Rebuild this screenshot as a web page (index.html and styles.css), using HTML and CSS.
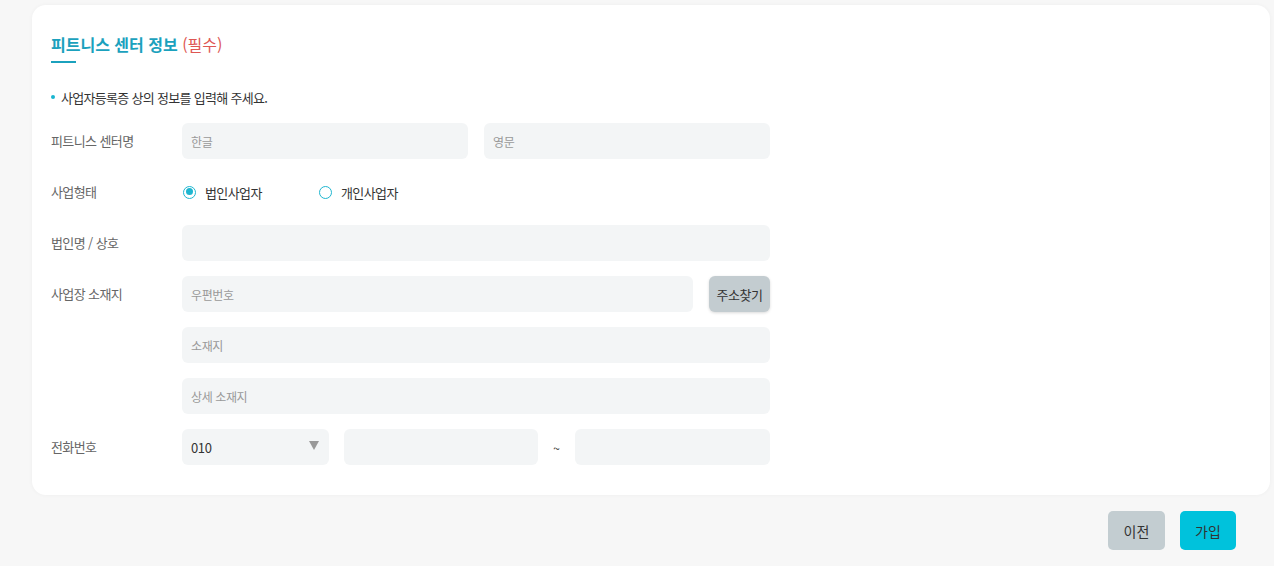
FILE: index.html
```html
<!DOCTYPE html>
<html lang="ko">
<head>
<meta charset="utf-8">
<link rel="stylesheet" href="styles.css">
</head>
<body>
<div class="page">
  <section class="card">
    <h2 class="title">피트니스 센터 정보 <span class="req">(필수)</span></h2>
    <div class="title-bar"></div>
    <p class="notice"><span class="dot"></span>사업자등록증 상의 정보를 입력해 주세요.</p>
    <div class="form">
      <div class="row">
        <div class="label">피트니스 센터명</div>
        <div class="fields two">
          <div class="input"><span class="ph">한글</span></div>
          <div class="input"><span class="ph">영문</span></div>
        </div>
      </div>
      <div class="row">
        <div class="label">사업형태</div>
        <div class="fields radios">
          <label class="radio checked"><span class="circle"></span>법인사업자</label>
          <label class="radio"><span class="circle"></span>개인사업자</label>
        </div>
      </div>
      <div class="row">
        <div class="label">법인명 / 상호</div>
        <div class="fields"><div class="input"></div></div>
      </div>
      <div class="row">
        <div class="label">사업장 소재지</div>
        <div class="fields stack">
          <div class="addr">
            <div class="input"><span class="ph">우편번호</span></div>
            <button class="find">주소찾기</button>
          </div>
          <div class="input"><span class="ph">소재지</span></div>
          <div class="input"><span class="ph">상세 소재지</span></div>
        </div>
      </div>
      <div class="row">
        <div class="label">전화번호</div>
        <div class="fields phone">
          <div class="input select"><span class="val">010</span><span class="arrow"></span></div>
          <div class="input"></div>
          <span class="tilde">~</span>
          <div class="input"></div>
        </div>
      </div>
    </div>
  </section>
  <div class="actions">
    <button class="btn prev">이전</button>
    <button class="btn join">가입</button>
  </div>
</div>
</body>
</html>
```
FILE: styles.css
```css
* { box-sizing: border-box; }
html, body {
  margin: 0;
  padding: 0;
  background: #f7f7f7;
  font-family: "Noto Sans CJK KR", "Noto Sans", sans-serif;
  color: #333;
}
.page {
  padding: 5px 4px 0 32px;
}
.card {
  background: #fff;
  border-radius: 14px;
  box-shadow: 0 0 4px rgba(0,0,0,0.04);
  padding: 27px 19px 30px 19px;
}
.title {
  margin: 0;
  font-size: 16px;
  line-height: 24px;
  font-weight: 700;
  color: #1ba1bd;
}
.title .req {
  font-weight: 400;
  color: #de5753;
}
.title-bar {
  width: 25px;
  height: 2px;
  background: #1ba1bd;
  margin-top: 5px;
}
.notice {
  margin: 25px 0 15px 0;
  font-size: 13px;
  line-height: 20px;
  letter-spacing: -0.7px;
  color: #333;
  display: flex;
  align-items: center;
}
.notice .dot {
  width: 4px;
  height: 4px;
  border-radius: 50%;
  background: #19b5d0;
  margin-right: 6px;
  margin-top: -2px;
}
.form {
  display: flex;
  flex-direction: column;
  gap: 15px;
}
.row {
  display: flex;
  align-items: flex-start;
}
.label {
  width: 131px;
  flex: none;
  height: 36px;
  line-height: 36px;
  font-size: 13px;
  letter-spacing: -0.6px;
  color: #666;
}
.fields {
  width: 588px;
  display: flex;
}
.fields > .input { flex: 1; }
.two { gap: 16px; }
.input {
  height: 36px;
  background: #f3f5f6;
  border-radius: 6px;
  display: flex;
  align-items: center;
  padding: 0 9px;
  font-size: 12px;
  letter-spacing: -0.4px;
}
.ph { color: #999; }
.radios {
  height: 36px;
  align-items: center;
}
.radio {
  display: flex;
  align-items: center;
  font-size: 13px;
  letter-spacing: -0.6px;
  color: #333;
  width: 136px;
  padding-left: 1px;
}
.circle {
  width: 13px;
  height: 13px;
  border-radius: 50%;
  border: 1.5px solid #1fb6d0;
  margin-right: 9px;
  position: relative;
}
.radio.checked .circle::after {
  content: "";
  position: absolute;
  left: 1.5px;
  top: 1.5px;
  width: 7px;
  height: 7px;
  border-radius: 50%;
  background: #1fb6d0;
}
.stack {
  flex-direction: column;
  gap: 15px;
}
.stack > .input { flex: none; }
.addr {
  display: flex;
  gap: 16px;
}
.addr .input { flex: 1; }
.find {
  width: 61px;
  height: 36px;
  border: none;
  border-radius: 6px;
  background: #c3ccd0;
  box-shadow: 0 1px 3px rgba(0,0,0,0.15);
  font-family: inherit;
  font-size: 13px;
  letter-spacing: -0.5px;
  color: #333;
  padding: 0;
}
.phone { align-items: center; }
.phone .select {
  flex: none;
  width: 147px;
  margin-right: 15px;
  justify-content: space-between;
  padding-right: 10px;
}
.select .val {
  font-size: 13px;
  color: #333;
}
.select .arrow {
  width: 0;
  height: 0;
  border-left: 5px solid transparent;
  border-right: 5px solid transparent;
  border-top: 9px solid #999;
  margin-top: -4px;
}
.phone > .input:nth-child(2) { flex: none; width: 194px; }
.tilde {
  width: 37px;
  text-align: center;
  font-size: 12px;
  color: #333;
}
.actions {
  display: flex;
  justify-content: flex-end;
  gap: 15px;
  padding: 16px 34px 0 0;
}
.btn {
  height: 39px;
  border: none;
  border-radius: 5px;
  font-family: inherit;
  font-size: 14px;
  color: #333;
  padding: 0;
}
.prev { width: 57px; background: #c3cdd1; }
.join { width: 56px; background: #00c2dc; }
```
